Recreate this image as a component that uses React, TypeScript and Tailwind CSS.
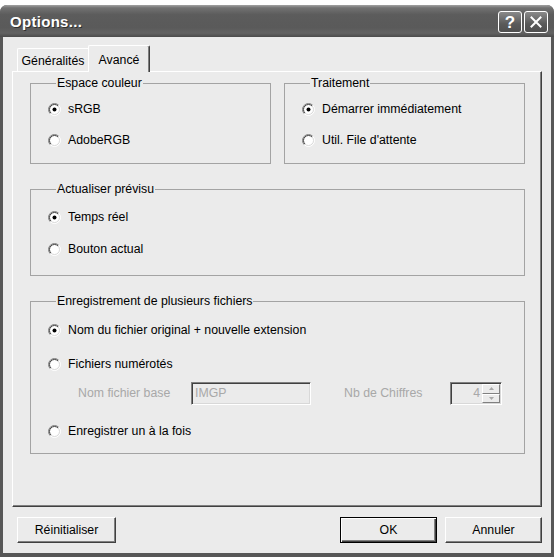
import React from "react";

function Radio({ checked }: { checked?: boolean }) {
  return (
    <svg width="13" height="13" viewBox="0 0 13 13" className="shrink-0">
      <circle cx="6.5" cy="6.5" r="5.5" fill="#ffffff" />
      <path d="M2.257 10.743 A6 6 0 0 1 10.743 2.257" fill="none" stroke="#808080" strokeWidth="1" />
      <path d="M10.743 2.257 A6 6 0 0 1 2.257 10.743" fill="none" stroke="#ffffff" strokeWidth="1" />
      <path d="M2.964 10.036 A5 5 0 0 1 10.036 2.964" fill="none" stroke="#404040" strokeWidth="1" />
      <path d="M10.036 2.964 A5 5 0 0 1 2.964 10.036" fill="none" stroke="#d8d8d8" strokeWidth="1" />
      {checked && <circle cx="6.5" cy="6.5" r="2" fill="#000000" />}
    </svg>
  );
}

function Option({ checked, children }: { checked?: boolean; children: React.ReactNode }) {
  return (
    <div className="flex items-center h-[14px] gap-[7px] leading-[14px] text-black">
      <Radio checked={checked} />
      <span className="whitespace-nowrap">{children}</span>
    </div>
  );
}

function Group({ title, className, children }: { title: string; className: string; children: React.ReactNode }) {
  return (
    <fieldset className={`border border-[#a3a3a3] ${className}`}>
      <legend className="ml-[8px] px-[1px] leading-[14px] text-black">{title}</legend>
      {children}
    </fieldset>
  );
}

export default function App() {
  return (
    <div className="w-[554px] h-[557px] bg-white pt-[5px] font-['Liberation_Sans',Arial,sans-serif] text-[12.3px]">
      <div className="h-[552px] flex flex-col rounded-t-[7px] overflow-hidden bg-[#575757]">
        {/* Title bar */}
        <div className="h-[32px] shrink-0 flex items-center justify-between pl-[10px] pr-[6px] bg-[linear-gradient(to_bottom,#a2a2a2_0%,#727272_9%,#5c5c5c_30%,#5a5a5a_70%,#626262_88%,#4b4b4b_100%)]">
          <span className="text-white font-bold text-[15px] leading-none tracking-[0.3px] [text-shadow:1px_1px_0_#303030]">
            Options...
          </span>
          <div className="flex gap-[2px] pt-[2px]">
            <div className="w-[24px] h-[22px] rounded-[3px] border border-white bg-[linear-gradient(to_bottom,#8a8a8a,#5a5a5a_60%,#505050)] flex items-center justify-center text-white font-bold text-[17px] leading-none">
              ?
            </div>
            <div className="w-[24px] h-[22px] rounded-[3px] border border-white bg-[linear-gradient(to_bottom,#8a8a8a,#5a5a5a_60%,#505050)] flex items-center justify-center">
              <svg width="14" height="14" viewBox="0 0 14 14">
                <path d="M2.5 2.5 L11.5 11.5 M11.5 2.5 L2.5 11.5" stroke="#ffffff" strokeWidth="2" strokeLinecap="square" />
              </svg>
            </div>
          </div>
        </div>

        {/* Client area */}
        <div className="flex-1 mx-[3px] mb-[4px] bg-[#ebebeb] flex flex-col px-[9px] pt-[8px]">
          {/* Tabs */}
          <div className="h-[26px] flex items-end pl-[5px]">
            <div className="w-[71px] h-[23px] flex items-center justify-center pt-[2px] border-t border-l border-white rounded-tl-[2px] text-black">
              Généralités
            </div>
            <div className="relative z-10 -mb-px w-[62px] h-[27px] flex items-start justify-center pt-[5px] bg-[#ebebeb] border-t border-l border-r border-t-white border-l-white border-r-[#404040] rounded-t-[2px] shadow-[inset_-1px_0_0_#808080] text-black">
              Avancé
            </div>
          </div>

          {/* Panel */}
          <div className="h-[436px] border border-t-white border-l-white border-r-[#404040] border-b-[#404040] shadow-[inset_-1px_-1px_0_#808080] pt-[4px] pl-[17px] pr-[16px]">
            <div className="grid grid-cols-2 gap-[13px]">
              <Group title="Espace couleur" className="pl-[17px] pt-[12px] pb-[16px]">
                <div className="flex flex-col gap-[17px]">
                  <Option checked>sRGB</Option>
                  <Option>AdobeRGB</Option>
                </div>
              </Group>
              <Group title="Traitement" className="pl-[17px] pt-[12px] pb-[16px]">
                <div className="flex flex-col gap-[17px]">
                  <Option checked>Démarrer immédiatement</Option>
                  <Option>Util. File d'attente</Option>
                </div>
              </Group>
            </div>

            <Group title="Actualiser prévisu" className="mt-[18px] pl-[17px] pt-[14px] pb-[19px]">
              <div className="flex flex-col gap-[18px]">
                <Option checked>Temps réel</Option>
                <Option>Bouton actual</Option>
              </div>
            </Group>

            <Group title="Enregistrement de plusieurs fichiers" className="mt-[18px] pl-[17px] pt-[15px] pb-[15px]">
              <div className="flex flex-col">
                <Option checked>Nom du fichier original + nouvelle extension</Option>
                <div className="mt-[20px]">
                  <Option>Fichiers numérotés</Option>
                </div>
                <div className="mt-[11px] h-[23px] flex items-center">
                  <span className="w-[143px] shrink-0 pl-[30px] whitespace-nowrap text-[#a8a8a8]">Nom fichier base</span>
                  <div className="w-[120px] shrink-0 h-[23px] flex items-center pl-[3px] border border-t-[#808080] border-l-[#808080] border-b-white border-r-white shadow-[inset_1px_1px_0_#404040,inset_-1px_-1px_0_#d8d8d8] text-[#a8a8a8]">
                    IMGP
                  </div>
                  <span className="ml-[33px] w-[106px] shrink-0 whitespace-nowrap text-[#a8a8a8]">Nb de Chiffres</span>
                  <div className="w-[52px] shrink-0 h-[23px] flex items-stretch border border-t-[#808080] border-l-[#808080] border-b-white border-r-white shadow-[inset_1px_1px_0_#404040,inset_-1px_-1px_0_#d8d8d8] p-[1px]">
                    <div className="flex-1 flex items-center justify-end pr-[2px] text-[#a8a8a8]">4</div>
                    <div className="w-[18px] flex flex-col">
                      <div className="flex-1 flex items-center justify-center border border-t-white border-l-white border-r-[#808080] border-b-[#808080] bg-[#ebebeb]">
                        <svg width="5" height="3" viewBox="0 0 5 3">
                          <path d="M0 3 L2.5 0 L5 3 Z" fill="#a8a8a8" />
                        </svg>
                      </div>
                      <div className="flex-1 flex items-center justify-center border border-t-white border-l-white border-r-[#808080] border-b-[#808080] bg-[#ebebeb]">
                        <svg width="5" height="3" viewBox="0 0 5 3">
                          <path d="M0 0 L2.5 3 L5 0 Z" fill="#a8a8a8" />
                        </svg>
                      </div>
                    </div>
                  </div>
                </div>
                <div className="mt-[19px]">
                  <Option>Enregistrer un à la fois</Option>
                </div>
              </div>
            </Group>
          </div>

          {/* Buttons */}
          <div className="mt-[10px] h-[26px] flex items-stretch">
            <button className="ml-[5px] w-[99px] bg-[#ebebeb] border border-t-white border-l-white border-r-[#404040] border-b-[#404040] shadow-[inset_-1px_-1px_0_#808080] text-black">
              Réinitialiser
            </button>
            <div className="flex-1" />
            <button className="w-[97px] bg-[#ebebeb] border border-black shadow-[inset_1px_1px_0_#ffffff,inset_-1px_-1px_0_#404040,inset_-2px_-2px_0_#808080] text-black">
              OK
            </button>
            <button className="ml-[8px] w-[97px] bg-[#ebebeb] border border-t-white border-l-white border-r-[#404040] border-b-[#404040] shadow-[inset_-1px_-1px_0_#808080] text-black">
              Annuler
            </button>
          </div>
        </div>
      </div>
    </div>
  );
}
